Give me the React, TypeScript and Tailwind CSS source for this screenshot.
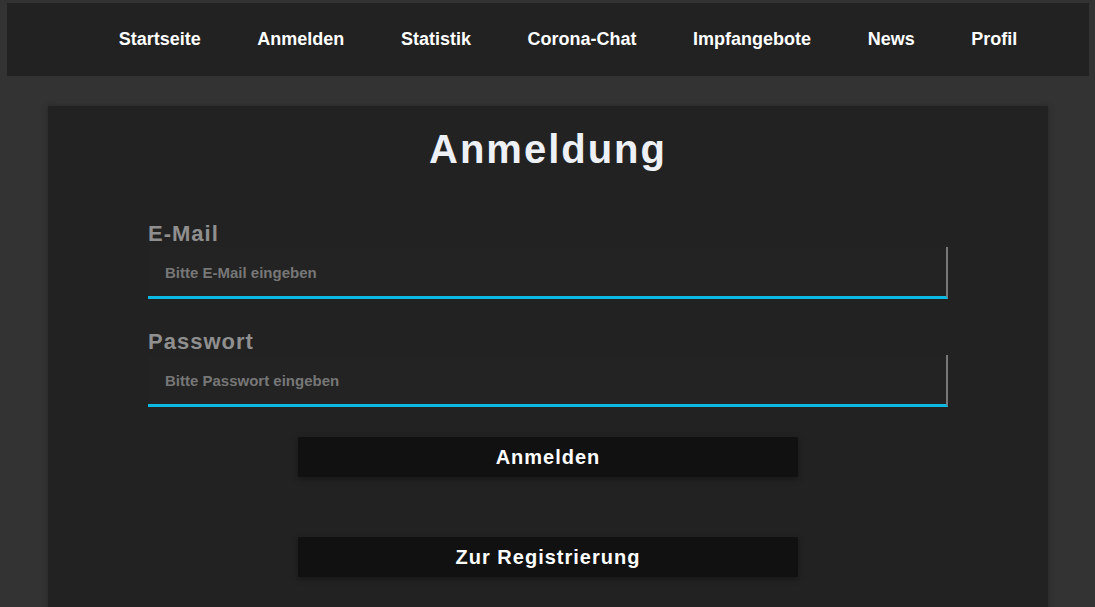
import React from "react";

const navItems = ["Startseite", "Anmelden", "Statistik", "Corona-Chat", "Impfangebote", "News", "Profil"];

function Field({ label, placeholder, type, first }: { label: string; placeholder: string; type: string; first?: boolean }) {
  return (
    <div className={first ? "mt-[49px]" : "mt-[30px]"}>
      <label className="block text-[22px] font-bold tracking-[1px] text-[#8f8f8f] leading-[25px] mb-[1px]">{label}</label>
      <input
        type={type}
        placeholder={placeholder}
        className="block w-[800px] h-[52px] bg-[#232323] border-0 border-b-[3px] border-r-2 border-b-[#0cb9e2] border-r-[#777] pl-[17px] pt-[2px] text-[15px] font-bold text-[#ccc] placeholder:text-[#777] outline-none"
      />
    </div>
  );
}

export default function App() {
  return (
    <div className="min-h-[607px] bg-[#333333] pt-[3px] overflow-hidden" style={{ fontFamily: '"Liberation Sans", Arial, sans-serif' }}>
      <nav className="ml-[7px] mr-[6px] h-[73px] bg-[#222222]">
        <ul className="flex h-full items-center justify-center pl-[40px] pb-[2px]">
          {navItems.map((n) => (
            <li key={n} className="px-[28.3px] text-[18px] font-bold text-white leading-none">
              {n}
            </li>
          ))}
        </ul>
      </nav>
      <main className="ml-[48px] mt-[30px] w-[1000px] bg-[#222222] pt-[20px] pb-[40px] shadow-[0_0_6px_rgba(0,0,0,0.25)] flex flex-col items-center">
        <h1 className="text-[40px] font-bold leading-[46px] tracking-[2px] text-[#edf0f5]">Anmeldung</h1>
        <div className="w-[800px]">
          <Field label="E-Mail" placeholder="Bitte E-Mail eingeben" type="email" first />
          <Field label="Passwort" placeholder="Bitte Passwort eingeben" type="password" />
        </div>
        <button className="mt-[30px] w-[500px] h-[40px] bg-[#111111] text-white text-[20px] font-bold tracking-[1px] shadow-[0_2px_6px_rgba(0,0,0,0.35)]">
          Anmelden
        </button>
        <button className="mt-[60px] w-[500px] h-[40px] bg-[#111111] text-white text-[20px] font-bold tracking-[1px] shadow-[0_2px_6px_rgba(0,0,0,0.35)]">
          Zur Registrierung
        </button>
      </main>
    </div>
  );
}
